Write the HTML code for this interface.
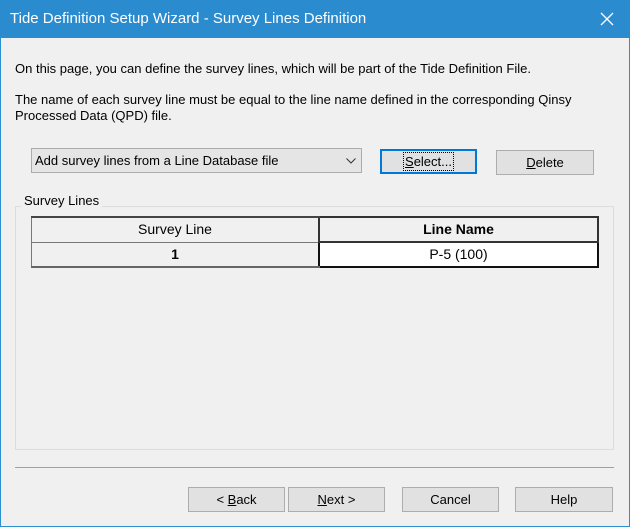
<!DOCTYPE html>
<html><head><style>
body{margin:0;width:630px;height:527px;overflow:hidden;font-family:"Liberation Sans",sans-serif;font-size:13px;color:#000}
.win{position:absolute;left:0;top:0;width:628px;height:525px;border:1px solid #2b8fd1;background:#f0f0f0}
.title{position:absolute;left:0;top:0;width:630px;height:38px;background:#2b8bcf;color:#fff;font-size:15px}
.title span{position:absolute;left:10px;top:10px}
.a{position:absolute;white-space:nowrap}
.btn{position:absolute;background:#e1e1e1;border:1px solid #adadad;box-sizing:border-box;text-align:center;line-height:23px;font-size:13px}
.combo{position:absolute;left:31px;top:148px;width:331px;height:25px;background:#e5e5e5;border:1px solid #acacac;box-sizing:border-box;font-size:13px;line-height:23px;padding-left:3px}
.grp{position:absolute;left:15px;top:206px;width:599px;height:244px;border:1px solid #dcdcdc;box-sizing:border-box}
table{position:absolute;left:31px;top:216px;border-collapse:collapse;width:568px;font-size:14px}
td{height:23px;text-align:center;padding:0;line-height:23px}
</style></head><body>
<div class="win"></div>
<div class="title"><span>Tide Definition Setup Wizard - Survey Lines Definition</span>
<svg style="position:absolute;left:600px;top:12px" width="14" height="14"><path d="M1 1L13 13M13 1L1 13" stroke="#fff" stroke-width="1.3"/></svg></div>
<div class="a" style="left:15px;top:61px">On this page, you can define the survey lines, which will be part of the Tide Definition File.</div>
<div class="a" style="left:15px;top:92px">The name of each survey line must be equal to the line name defined in the corresponding Qinsy</div>
<div class="a" style="left:15px;top:108px">Processed Data (QPD) file.</div>
<div class="combo">Add survey lines from a Line Database file<svg style="position:absolute;right:5px;top:9px" width="10" height="6"><path d="M0.5 0.5L5 5L9.5 0.5" stroke="#333" fill="none"/></svg></div>
<div class="btn" style="left:380px;top:149px;width:97px;height:25px;border:2px solid #0078d7;line-height:21px"><span style="outline:1px dotted #000;outline-offset:1px"><u>S</u>elect...</span></div>
<div class="btn" style="left:496px;top:150px;width:98px;height:25px"><u>D</u>elete</div>
<div class="grp"></div>
<div class="a" style="left:21px;top:193px;background:#f0f0f0;padding:0 3px">Survey Lines</div>
<table>
<tr><td style="width:286px;border:1px solid #777;border-top:2px solid #444;background:#f0f0f0">Survey Line</td><td style="border:2px solid #333;font-weight:bold;background:#f0f0f0">Line Name</td></tr>
<tr><td style="border:1px solid #777;border-bottom:2px solid #666;font-weight:bold">1</td><td style="border:2px solid #111;background:#fff">P-5 (100)</td></tr>
</table>
<div style="position:absolute;left:15px;top:467px;width:599px;height:1px;background:#a0a0a0"></div>
<div class="btn" style="left:188px;top:487px;width:97px;height:25px">&lt; <u>B</u>ack</div>
<div class="btn" style="left:288px;top:487px;width:97px;height:25px"><u>N</u>ext &gt;</div>
<div class="btn" style="left:402px;top:487px;width:97px;height:25px">Cancel</div>
<div class="btn" style="left:515px;top:487px;width:98px;height:25px">Help</div>
</body></html>
